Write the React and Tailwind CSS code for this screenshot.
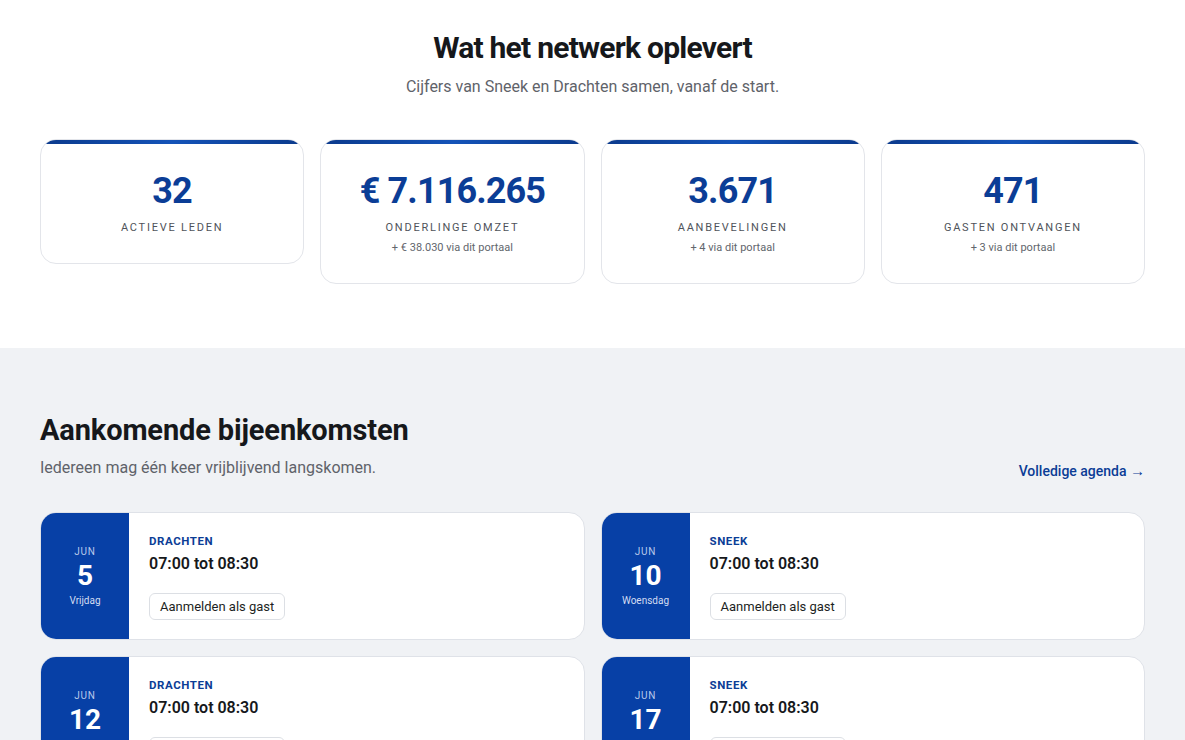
import React from "react";

const stats = [
  { value: "32", label: "ACTIEVE LEDEN" },
  { value: "€ 7.116.265", label: "ONDERLINGE OMZET", sub: "+ € 38.030 via dit portaal" },
  { value: "3.671", label: "AANBEVELINGEN", sub: "+ 4 via dit portaal" },
  { value: "471", label: "GASTEN ONTVANGEN", sub: "+ 3 via dit portaal" },
];

const events = [
  { month: "JUN", day: "5", weekday: "Vrijdag", city: "DRACHTEN" },
  { month: "JUN", day: "10", weekday: "Woensdag", city: "SNEEK" },
  { month: "JUN", day: "12", weekday: "Vrijdag", city: "DRACHTEN" },
  { month: "JUN", day: "17", weekday: "Woensdag", city: "SNEEK" },
];

function StatCard({ value, label, sub }) {
  return (
    <div className="rounded-2xl border border-[#e3e5ea] bg-white overflow-hidden">
      <div className="h-1 bg-gradient-to-r from-[#0b3a8c] via-[#1453b8] to-[#0b3a8c]" />
      <div className={"flex flex-col items-center pt-[27px] text-center " + (sub ? "pb-[26px]" : "pb-[27px]")}>
        <div className="text-[36px] leading-[40px] font-bold text-[#0b3d96] tracking-[-0.025em]">{value}</div>
        <div className="mt-[9px] text-[11px] leading-4 font-normal tracking-[0.16em] text-[#4f535a]">{label}</div>
        {sub && <div className="mt-[3px] text-[11px] leading-[18px] text-[#62666d]">{sub}</div>}
      </div>
    </div>
  );
}

function EventCard({ month, day, weekday, city }) {
  return (
    <div className="flex h-[128px] rounded-2xl border border-[#dfe2e8] bg-white overflow-hidden">
      <div className="w-[88px] shrink-0 bg-[#0740a6] flex flex-col items-center justify-center text-white">
        <div className="text-[10px] leading-4 tracking-[0.08em] text-[#b9c9ea]">{month}</div>
        <div className="text-[28px] leading-8 font-bold">{day}</div>
        <div className="text-[10px] leading-4 mt-[1px] text-[#d3ddf2]">{weekday}</div>
      </div>
      <div className="flex flex-col items-start pl-5 pt-5">
        <div className="text-[11.5px] leading-4 font-bold tracking-[0.05em] text-[#0b3d96]">{city}</div>
        <div className="mt-[3px] text-[16px] leading-6 font-semibold text-[#16181b]">07:00 tot 08:30</div>
        <button className="mt-[17px] h-[27px] px-[10px] rounded-md border border-[#dcdfe4] bg-white text-[13px] text-[#1d1f23]">
          Aanmelden als gast
        </button>
      </div>
    </div>
  );
}

export default function App() {
  return (
    <div className="min-h-screen bg-white" style={{ fontFamily: "Roboto, 'Liberation Sans', sans-serif" }}>
      <section className="pt-[30px] pb-16">
        <div className="w-[1105px] mx-auto">
          <h1 className="text-center text-[30px] leading-9 font-bold text-[#16181b] tracking-[-0.025em]">Wat het netwerk oplevert</h1>
          <p className="mt-[9px] text-center text-[16px] leading-6 text-[#5f636a]">Cijfers van Sneek en Drachten samen, vanaf de start.</p>
          <div className="mt-10 grid grid-cols-4 gap-4 items-start">
            {stats.map((s) => (
              <StatCard key={s.label} {...s} />
            ))}
          </div>
        </div>
      </section>
      <section className="bg-[#f0f2f5] pt-16 pb-16">
        <div className="w-[1105px] mx-auto">
          <div className="flex items-end justify-between">
            <div>
              <h2 className="text-[29px] leading-9 font-bold text-[#16181b] tracking-[-0.005em]">Aankomende bijeenkomsten</h2>
              <p className="mt-[8px] text-[16px] leading-6 text-[#5f636a]">Iedereen mag één keer vrijblijvend langskomen.</p>
            </div>
            <a className="text-[14px] leading-5 font-medium text-[#0b3d96] mb-[-1px]">Volledige agenda <span className="text-[15px]">→</span></a>
          </div>
          <div className="mt-[32px] grid grid-cols-2 gap-4">
            {events.map((e, i) => (
              <EventCard key={i} {...e} />
            ))}
          </div>
        </div>
      </section>
    </div>
  );
}
